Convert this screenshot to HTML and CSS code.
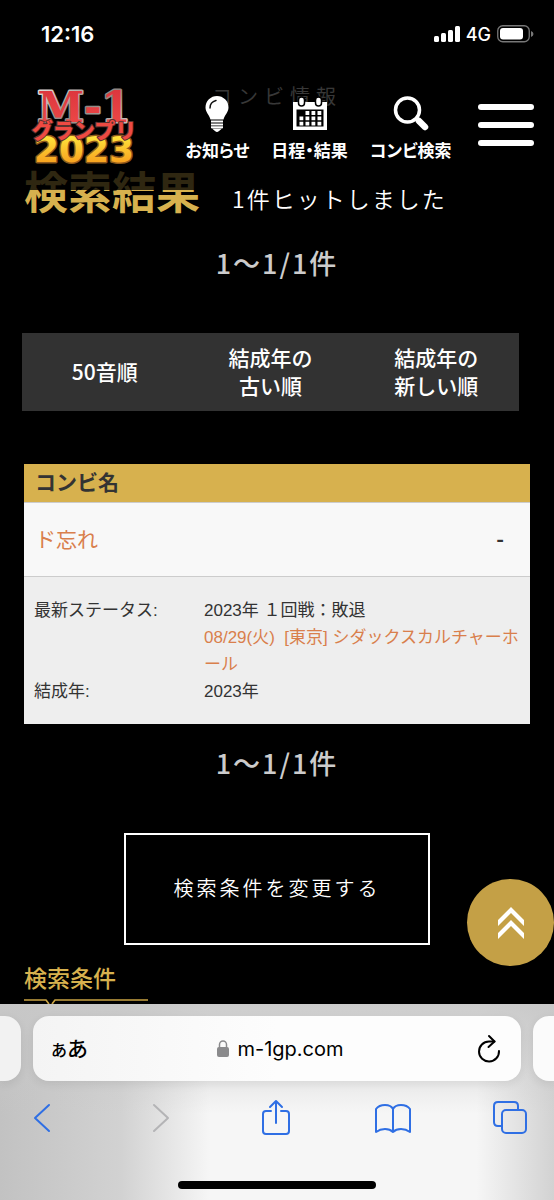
FILE: index.html
```html
<!DOCTYPE html>
<html lang="ja">
<head>
<meta charset="utf-8">
<meta name="viewport" content="width=device-width, initial-scale=1">
<title>コンビ情報 検索結果</title>
<link rel="stylesheet" href="styles.css">
</head>
<body>
<header class="top">
  <div class="status">
    <span class="clock">12:16</span>
    <span class="signals">
      <svg width="26" height="16" viewBox="0 0 26 16" fill="#fff"><rect y="10" width="5" height="6" rx="1.5"/><rect x="7" y="7" width="5" height="9" rx="1.5"/><rect x="14" y="4" width="5" height="12" rx="1.5"/><rect x="21" width="5" height="16" rx="1.5"/></svg>
      <span class="net">4G</span>
      <svg width="37" height="18" viewBox="0 0 37 18"><rect x=".75" y=".75" width="31.5" height="16" rx="5" fill="none" stroke="#777" stroke-width="1.3"/><rect x="3" y="3" width="23" height="11.5" rx="3" fill="#fff"/><path d="M34 6q2.500 1 2.500 3t-2.500 3z" fill="#777"/></svg>
    </span>
  </div>
  <div class="bar">
    <a class="logo" href="#" aria-label="M-1グランプリ2023">
      <svg width="118" height="76" viewBox="0 0 118 76">
        <defs>
          <linearGradient id="red" x1="0" y1="0" x2="0" y2="1"><stop offset="0" stop-color="#d9333c"/><stop offset="1" stop-color="#f04b48"/></linearGradient>
          <linearGradient id="gold" x1="0" y1="0" x2="0" y2="1"><stop offset="0.200" stop-color="#ffe23a"/><stop offset="0.900" stop-color="#f79a1c"/></linearGradient>
          <linearGradient id="rim" x1="0" y1="0" x2="1" y2="1"><stop offset="0" stop-color="#f2eeea"/><stop offset="0.500" stop-color="#8d8581"/><stop offset="1" stop-color="#d8d2ce"/></linearGradient>
        </defs>
        <g text-anchor="middle" paint-order="stroke" stroke-linejoin="round">
          <text class="logo-m" x="59" y="32" fill="url(#red)" stroke="url(#rim)" stroke-width="3">M-1</text>
          <text class="logo-year" x="59" y="72" fill="url(#gold)" stroke="#8e5a1c" stroke-width="3">2023</text>
          <text class="logo-kana" x="59" y="48" fill="#ee4a42" stroke="#5a322e" stroke-width="2">グランプリ</text>
        </g>
      </svg>
    </a>
    <nav class="nav">
      <a href="#">
        <svg width="24" height="36" viewBox="0 0 24 36"><path d="M12 0a11.500 11.500 0 0 0-11.500 11.500c0 5 4 7.500 5 12h13c1-4.500 5-7 5-12A11.500 11.500 0 0 0 12 0z" fill="#fff"/><path d="M5 12q0-6 6-7.500" fill="none" stroke="#111" stroke-width="1.500" stroke-linecap="round"/><path d="M6 25.500h12M6 28.500h12M6 31.300h12" stroke="#fff" stroke-width="1.900"/><path d="M7 32.500h10l-3 2.500q-2 2-4 0z" fill="#fff"/></svg>
        <span>お知らせ</span>
      </a>
      <a href="#">
        <svg width="34" height="36" viewBox="0 0 34 36"><path d="M0 6h34v28H0z" fill="#fff"/><path d="M3.500 13.500h27v17h-27z" fill="#000"/><g fill="#fff" stroke="#000" stroke-width="1.500"><rect x="5.500" y="1" width="6" height="9" rx="3"/><rect x="22.500" y="1" width="6" height="9" rx="3"/></g><path d="M12.500 17H29M6.500 22.300H29M6.500 27.600H29" stroke="#fff" stroke-width="3.800" stroke-dasharray="3.800 2.200"/></svg>
        <span>日程・結果</span>
      </a>
      <a href="#">
        <svg width="36" height="36" viewBox="0 0 36 36" fill="none" stroke="#fff"><circle cx="14.500" cy="14" r="12" stroke-width="3.500"/><path d="M23 22l2.500 2.500" stroke-width="4"/><path d="M26 25l6 6" stroke-width="6.500" stroke-linecap="round"/></svg>
        <span>コンビ検索</span>
      </a>
    </nav>
    <button class="burger" aria-label="メニュー"><i></i><i></i><i></i></button>
  </div>
</header>

<main class="page">
  <p class="crumb">コンビ情報</p>
  <div class="heading">
    <h1>検索結果</h1>
    <p>1件ヒットしました</p>
  </div>
  <p class="count">1〜1/1件</p>
  <div class="sort">
    <button>50音順</button>
    <button>結成年の<br>古い順</button>
    <button>結成年の<br>新しい順</button>
  </div>
  <section class="card">
    <h2>コンビ名</h2>
    <div class="name"><a href="#">ド忘れ</a><b>-</b></div>
    <dl>
      <dt>最新ステータス:</dt>
      <dd>2023年 １回戦：敗退<br><a href="#">08/29(火)&nbsp; [東京] シダックスカルチャーホール</a></dd>
      <dt>結成年:</dt>
      <dd>2023年</dd>
    </dl>
  </section>
  <p class="count">1〜1/1件</p>
  <button class="change">検索条件を変更する</button>
  <section class="terms">
    <h2>検索条件</h2>
    <svg width="124" height="4" viewBox="0 0 124 4" fill="none" stroke="#c9a343" stroke-width="1.700"><path d="M0 1h22l3 4M28 5l3-4h93"/></svg>
  </section>
  <button class="to-top" aria-label="ページの先頭へ">
    <svg width="26" height="32" viewBox="0 0 26 32" fill="#fff"><path d="M13 0l13 13v6L13 6 0 19v-6z"/><path d="M13 13l13 13v6L13 19 0 32v-6z"/></svg>
  </button>
</main>

<footer class="browser">
  <div class="tabs">
    <div class="tab prev"></div>
    <div class="tab address">
      <button class="aa" aria-label="ページ設定"><small>あ</small>あ</button>
      <span class="host">
        <svg width="12" height="17" viewBox="0 0 12 17"><rect y="7" width="12" height="10" rx="2" fill="#8a8a8c"/><path d="M2.500 8V4.500a3.500 3.500 0 0 1 7 0V8" fill="none" stroke="#8a8a8c" stroke-width="1.500"/></svg>
        m-1gp.com
      </span>
      <button aria-label="再読み込み"><svg width="24" height="30" viewBox="0 0 24 30" fill="none" stroke="#000" stroke-width="2" stroke-linecap="round" stroke-linejoin="round"><path d="M17.500 7.500H12A10 10 0 1 0 22 17"/><path d="M12 2l5.500 5.500L11.500 13"/></svg></button>
    </div>
    <div class="tab next"></div>
  </div>
  <div class="tools">
    <button aria-label="戻る"><svg width="34" height="36" viewBox="0 0 34 36"><path d="M22 5L8 18l14 13"/></svg></button>
    <button class="off" aria-label="進む"><svg width="34" height="36" viewBox="0 0 34 36"><path d="M11 5l14 13-14 13"/></svg></button>
    <button aria-label="共有"><svg width="34" height="36" viewBox="0 0 34 36"><path d="M12 11H7q-3 0-3 3v17q0 3 3 3h20q3 0 3-3V14q0-3-3-3h-5M17 23V1M11 7l6-6 6 6"/></svg></button>
    <button aria-label="ブックマーク"><svg width="36" height="36" viewBox="0 0 36 36"><path d="M18 9v23q-3-3-8-3-5 0-9 3V9q3-4 9-4t8 4q2-4 8-4t9 4v23q-4-3-9-3-5 0-8 3"/></svg></button>
    <button aria-label="タブ"><svg width="34" height="36" viewBox="0 0 34 36"><path d="M8 26H5q-4 0-4-4V6q0-4 4-4h16q4 0 4 4v3"/><rect x="9" y="10" width="24" height="23" rx="4"/></svg></button>
  </div>
  <div class="home"></div>
</footer>
</body>
</html>
```
FILE: styles.css
```css
* { box-sizing: border-box; }
body, h1, h2, p, dl, dd { margin: 0; }
body {
  display: flex;
  flex-direction: column;
  min-height: 100vh;
  background: #000;
  color: #fff;
  font-family: "Liberation Sans", "Noto Sans CJK JP", sans-serif;
}
button { font: inherit; color: inherit; background: none; border: 0; padding: 0; }
a { color: inherit; text-decoration: none; }
svg { display: block; flex: none; overflow: visible; }

.top {
  position: absolute;
  top: 0;
  left: 0;
  right: 0;
  z-index: 2;
  height: 190px;
  background: rgba(0, 0, 0, .78);
}
.status {
  display: flex;
  justify-content: space-between;
  align-items: center;
  height: 68px;
  padding: 0 20px 0 41px;
  font-family: Inter, sans-serif;
}
.clock { font-size: 22px; font-weight: 600; }
.signals { display: flex; align-items: center; gap: 6px; }
.net { font-size: 18px; font-weight: 500; }
.bar {
  display: flex;
  justify-content: space-between;
  align-items: flex-start;
  padding: 22px 20px 0 25px;
}
.nav { display: flex; gap: 22px; padding: 6px 0 0 16px; }
.nav a {
  display: flex;
  flex-direction: column;
  align-items: center;
  gap: 6px;
  font: 700 17px/24px "Noto Sans CJK JP", sans-serif;
  font-feature-settings: "palt";
}
.burger { display: flex; flex-direction: column; gap: 12px; padding-top: 14px; }
.burger i { width: 56px; height: 6px; border-radius: 3px; background: #fff; }
.logo-m { font: 700 42px "DejaVu Serif", serif; }
.logo-kana { font: 900 21px "Noto Sans CJK JP", sans-serif; }
.logo-year { font: 700 36px "DejaVu Sans", sans-serif; }

.page {
  position: relative;
  flex: 1;
  padding: 80px 24px 0;
  font-family: "Noto Sans CJK JP", sans-serif;
}
.crumb { font-size: 20px; line-height: 32px; font-weight: 350; letter-spacing: 6px; text-align: center; }
.heading { display: flex; align-items: center; gap: 32px; margin-top: 54px; }
.heading h1 { font-size: 44px; line-height: 48px; color: #d7b14e; font-weight: 700; }
.heading p { font-size: 23px; line-height: 32px; padding-top: 16px; font-weight: 350; letter-spacing: 2px; }
.count { font-size: 27px; line-height: 36px; font-weight: 500; color: #ccc; letter-spacing: 2px; text-align: center; }
.heading + .count { margin-top: 31px; }
.sort {
  display: grid;
  grid-template-columns: repeat(3, 1fr);
  margin: 52px 11px 0 -2px;
  background: #323232;
}
.sort button { min-height: 78px; padding-bottom: 2px; font-size: 21px; line-height: 28px; font-weight: 500; }
.card { margin-top: 53px; background: #eee; color: #333; }
.card h2 { padding: 0 11px 4px; font-size: 21px; line-height: 34px; background: #d7b14e; }
.name {
  display: flex;
  justify-content: space-between;
  align-items: center;
  height: 75px;
  padding: 0 26px 4px 11px;
  font-size: 21px;
  background: #f8f8f8;
  border: solid #ccc;
  border-width: 1px 0;
}
.card a { color: #d97f4c; }
.card dl {
  display: grid;
  grid-template-columns: 170px 1fr;
  padding: 20px 2px 19px 10px;
  font: 17px/27px "Liberation Sans", "Noto Sans CJK JP", sans-serif;
}
.card dd { line-break: anywhere; }
.card + .count { margin-top: 21px; }
.change {
  display: block;
  width: 306px;
  height: 112px;
  margin: 52px auto 0;
  padding-bottom: 4px;
  border: 2px solid #fff;
  font-size: 20px;
  font-weight: 350;
  letter-spacing: 3px;
}
.terms { margin-top: 16px; }
.terms h2 { font-size: 23px; line-height: 32px; font-weight: 500; color: #d7b14e; }
.terms svg { margin-top: 6px; }
.to-top {
  position: absolute;
  right: 0;
  bottom: 38px;
  display: grid;
  place-items: center;
  width: 87px;
  height: 87px;
  border-radius: 50%;
  background: #c4a046;
}

.browser {
  position: relative;
  padding-top: 12px;
  overflow: hidden;
  color: #000;
  font-family: Inter, "Noto Sans CJK JP", sans-serif;
  background:
    linear-gradient(180deg, rgba(200, 200, 200, .9), rgba(220, 220, 220, 0) 110px),
    linear-gradient(90deg, #c2c2c2, #d2d2d2 22%, #f6f6f6 38%, #f6f6f6 86%, #d2d2d2);
}
.tabs { display: flex; gap: 12px; }
.tab { height: 65px; background: #fbfbfb; box-shadow: 0 3px 10px rgba(0, 0, 0, .08); }
.prev { width: 21px; border-radius: 0 16px 16px 0; background: #f2f2f2; }
.next { width: 21px; border-radius: 16px 0 0 16px; }
.address {
  flex: 1;
  display: flex;
  justify-content: space-between;
  align-items: center;
  padding: 0 20px 0 18px;
  border-radius: 16px;
  background: linear-gradient(90deg, #f4f4f4, #fdfdfd 50%);
}
.aa { padding-bottom: 4px; font-size: 21px; font-weight: 500; }
.aa small { font-size: 16px; }
.host { display: flex; align-items: center; gap: 8px; font-size: 20px; padding-right: 4px; }
.tools { display: flex; justify-content: space-between; padding: 19px 27px 0; }
.tools svg { fill: none; stroke: #2f6fe4; stroke-width: 2; stroke-linecap: round; stroke-linejoin: round; }
.tools .off svg { stroke: #b4b4b6; }
.home { width: 198px; height: 8px; margin: 45px auto 11px; border-radius: 4px; background: #000; }
```
